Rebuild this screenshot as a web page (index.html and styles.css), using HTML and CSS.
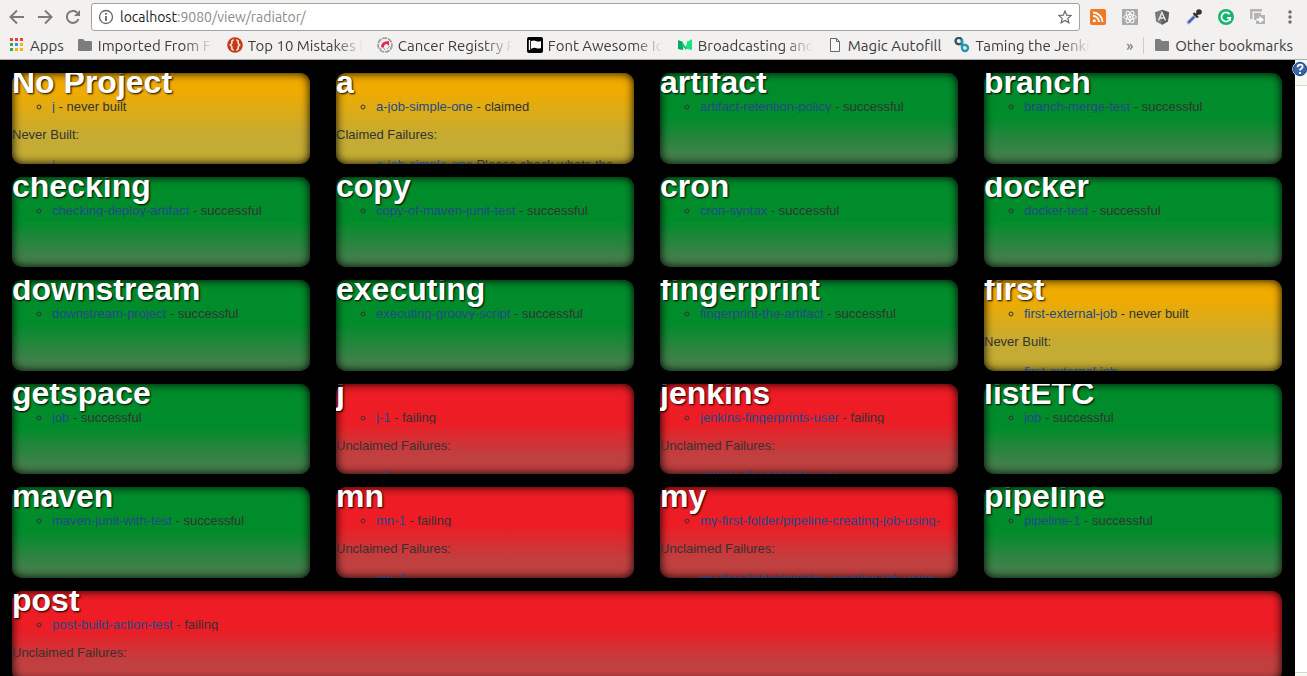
FILE: index.html
```html
<!DOCTYPE html>
<html lang="en">
<head>
<meta charset="utf-8">
<title>radiator</title>
<link rel="stylesheet" href="styles.css">
</head>
<body>
<header class="browser">
  <div class="toolbar">
    <nav class="nav">
      <button aria-label="Back"><svg width="16" height="16" viewBox="0 0 16 16"><path d="M15 8H2M8 1.5L1.5 8L8 14.500" fill="none" stroke="#7b7b7b" stroke-width="2"/></svg></button>
      <button aria-label="Forward"><svg width="16" height="16" viewBox="0 0 16 16"><path d="M1 8h13M8 1.500L14.500 8L8 14.500" fill="none" stroke="#7b7b7b" stroke-width="2"/></svg></button>
      <button aria-label="Reload"><svg width="16" height="16" viewBox="0 0 16 16"><path d="M13.500 10a6 6 0 1 1-1.300-6.300" fill="none" stroke="#7b7b7b" stroke-width="2"/><path d="M15 1v6H9z" fill="#7b7b7b"/></svg></button>
    </nav>
    <div class="address">
      <svg width="16" height="16" viewBox="0 0 16 16"><circle cx="8" cy="8" r="6.500" fill="none" stroke="#666" stroke-width="1.300"/><path d="M8 7v5M8 4v1.800" stroke="#666" stroke-width="1.800"/></svg>
      <a class="url" href="#"><span class="host">localhost</span>:9080/view/radiator/</a>
      <button aria-label="Bookmark this page"><svg width="14" height="14" viewBox="0 0 14 14"><path d="M7 1l1.700 4.200 4.500.3-3.400 2.900 1.100 4.400L7 10.400l-3.900 2.400 1.100-4.400L.8 5.500l4.500-.3z" fill="none" stroke="#6a6a6a" stroke-width="1.200"/></svg></button>
    </div>
    <div class="extensions">
      <button aria-label="Feed"><svg width="16" height="16" viewBox="0 0 16 16"><rect width="16" height="16" rx="2" fill="#ee7a28"/><circle cx="4.300" cy="11.800" r="1.500" fill="#fff"/><path d="M3 7a6 6 0 0 1 6 6M3 3.500a9.500 9.500 0 0 1 9.500 9.500" fill="none" stroke="#fff" stroke-width="1.800"/></svg></button>
      <button aria-label="React tools"><svg width="16" height="16" viewBox="0 0 16 16"><rect width="16" height="16" fill="#a9a9a9"/><g fill="none" stroke="#fff"><ellipse cx="8" cy="8" rx="6.300" ry="2.400"/><ellipse cx="8" cy="8" rx="6.300" ry="2.400" transform="rotate(60 8 8)"/><ellipse cx="8" cy="8" rx="6.300" ry="2.400" transform="rotate(120 8 8)"/></g><circle cx="8" cy="8" r="1.300" fill="#fff"/></svg></button>
      <button aria-label="Angular tools"><svg width="16" height="16" viewBox="0 0 16 16"><path d="M8 .8l7 2.400-1.100 9.200L8 15.800l-5.900-3.400L1 3.200z" fill="#77797b"/><path d="M8 .8l7 2.400-1.100 9.200L8 15.800z" fill="#5c5f61"/><path d="M4.500 11.500L8 3.500l3.500 8M6 9h4" fill="none" stroke="#e7e7e7" stroke-width="1.400"/></svg></button>
      <button aria-label="Color picker"><svg width="16" height="16" viewBox="0 0 16 16"><path d="M1.500 14.500l8-8" stroke="#98a4bd" stroke-width="3.600"/><path d="M2.500 13.500l5.500-5.500" stroke="#3459d6" stroke-width="1.800"/><path d="M7.500 4l4.500 4.500M10 6l3.500-3.500" stroke="#333" stroke-width="2.400"/><circle cx="13" cy="3" r="2.800" fill="#333"/></svg></button>
      <button aria-label="Grammar"><svg width="16" height="16" viewBox="0 0 16 16"><circle cx="8" cy="8" r="8" fill="#15b76c"/><path d="M11.600 5.300A4.500 4.500 0 1 0 12.400 8.800H9M12.200 8.500v3.200" fill="none" stroke="#fff" stroke-width="1.700"/></svg></button>
      <button aria-label="Copy tabs"><svg width="16" height="16" viewBox="0 0 16 16"><path d="M1.200 10V1.200H12" fill="none" stroke="#b4b4b4" stroke-width="2.400"/><path d="M4 4h7v2h4v9H6v-4H4z" fill="#b4b4b4"/><path d="M6.500 9.500h3V7l4.500 3.700-4.500 3.500v-2.400h-3z" fill="#fff"/></svg></button>
      <button class="menu" aria-label="Menu"><svg width="4" height="16" viewBox="0 0 4 16"><g fill="#6e6e6e"><circle cx="2" cy="3" r="1.700"/><circle cx="2" cy="8" r="1.700"/><circle cx="2" cy="13" r="1.700"/></g></svg></button>
    </div>
  </div>
  <nav class="bookmarks">
    <a class="mark" href="#"><svg width="16" height="16" viewBox="0 0 16 16"><path d="M1 1h3v3H1zM6 1h3v3H6zM11 1h3v3h-3z" fill="#ea4335"/><path d="M1 6h3v3H1zM1 11h3v3H1z" fill="#34a853"/><path d="M6 6h3v3H6z" fill="#4285f4"/><path d="M6 11h3v3H6zM11 6h3v3h-3zM11 11h3v3h-3z" fill="#f5b400"/></svg><span>Apps</span></a>
    <a class="mark wide" href="#"><svg width="16" height="16" viewBox="0 0 16 16"><path d="M1 3q0-1 1-1h4l2 2h6q1 0 1 1v8q0 1-1 1H2q-1 0-1-1z" fill="#7d7d7d"/></svg><span>Imported From Fi</span></a>
    <a class="mark wide" href="#"><svg width="16" height="16" viewBox="0 0 16 16"><circle cx="8" cy="8" r="7.800" fill="#c33c17"/><path d="M6.800 3q-2 0-2 2v1.500L3.300 8l1.500 1.500V11q0 2 2 2M9.200 3q2 0 2 2v1.500L12.700 8l-1.500 1.500V11q0 2-2 2" fill="none" stroke="#f8e4dc" stroke-width="1.600"/></svg><span>Top 10 Mistakes N</span></a>
    <a class="mark wide" href="#"><svg width="16" height="16" viewBox="0 0 16 16"><circle cx="8" cy="8" r="7" fill="#eee" stroke="#999" stroke-width="1.600" stroke-dasharray="5 1"/><path d="M4 10q0-6 8-6v5l-2-2q-3 0-3 3z" fill="#ee2445"/><path d="M3 12l3-2 2 3M10 12l3-3" stroke="#999" fill="none"/></svg><span>Cancer Registry P</span></a>
    <a class="mark wide" href="#"><svg width="16" height="16" viewBox="0 0 16 16"><rect width="16" height="16" rx="2" fill="#000"/><path d="M2.500 3v10" stroke="#fff" stroke-width="1.400"/><path d="M4 4q3-1 5 0t5 0v7q-3 1-5 0t-5 1z" fill="#fff"/></svg><span>Font Awesome Ic</span></a>
    <a class="mark wide" href="#"><svg width="16" height="16" viewBox="0 0 16 16"><path d="M1 3l5 2v8l-5-1z" fill="#07a862"/><path d="M5 5l4 5 2-7v6l-2 4-4-4z" fill="#12c978"/><path d="M10 5l5-3v11l-5-1z" fill="#16e585"/></svg><span>Broadcasting and</span></a>
    <a class="mark" href="#"><svg width="16" height="16" viewBox="0 0 16 16"><path d="M3.500 1.500h6l3 3v10h-9zM9.500 1.500v3h3" fill="#f8f8f8" stroke="#666"/></svg><span>Magic Autofill</span></a>
    <a class="mark wide" href="#"><svg width="16" height="16" viewBox="0 0 16 16"><path d="M8 8V4a3.200 3.200 0 1 0-2 3h3" fill="none" stroke="#365665" stroke-width="2.400"/><path d="M8 2v9a3 3 0 1 0 3-3H7" fill="none" stroke="#2497b5" stroke-width="2.400"/></svg><span>Taming the Jenki</span></a>
    <button class="more" aria-label="More bookmarks">»</button>
    <a class="mark other" href="#"><svg width="16" height="16" viewBox="0 0 16 16"><path d="M1 3q0-1 1-1h4l2 2h6q1 0 1 1v8q0 1-1 1H2q-1 0-1-1z" fill="#7d7d7d"/></svg><span>Other bookmarks</span></a>
  </nav>
</header>
<div class="page">
  <main class="radiator">
    <section class="card amber"><div class="body"><h1>No Project</h1><ul><li><a href="#">j</a> - never built</li></ul><p>Never Built:</p><ul class="detail"><li><a href="#">j</a></li></ul></div></section>
    <section class="card amber"><div class="body"><h1>a</h1><ul><li><a href="#">a-job-simple-one</a> - claimed</li></ul><p>Claimed Failures:</p><ul class="detail"><li><a href="#">a-job-simple-one</a> Please check whats the</li></ul></div></section>
    <section class="card green"><div class="body"><h1>artifact</h1><ul><li><a href="#">artifact-retention-policy</a> - successful</li></ul></div></section>
    <section class="card green"><div class="body"><h1>branch</h1><ul><li><a href="#">branch-merge-test</a> - successful</li></ul></div></section>
    <section class="card green"><div class="body"><h1>checking</h1><ul><li><a href="#">checking-deploy-artifact</a> - successful</li></ul></div></section>
    <section class="card green"><div class="body"><h1>copy</h1><ul><li><a href="#">copy-of-maven-junit-test</a> - successful</li></ul></div></section>
    <section class="card green"><div class="body"><h1>cron</h1><ul><li><a href="#">cron-syntax</a> - successful</li></ul></div></section>
    <section class="card green"><div class="body"><h1>docker</h1><ul><li><a href="#">docker-test</a> - successful</li></ul></div></section>
    <section class="card green"><div class="body"><h1>downstream</h1><ul><li><a href="#">downstream-project</a> - successful</li></ul></div></section>
    <section class="card green"><div class="body"><h1>executing</h1><ul><li><a href="#">executing-groovy-script</a> - successful</li></ul></div></section>
    <section class="card green"><div class="body"><h1>fingerprint</h1><ul><li><a href="#">fingerprint-the-artifact</a> - successful</li></ul></div></section>
    <section class="card amber"><div class="body"><h1>first</h1><ul><li><a href="#">first-external-job</a> - never built</li></ul><p>Never Built:</p><ul class="detail"><li><a href="#">first-external-job</a></li></ul></div></section>
    <section class="card green"><div class="body"><h1>getspace</h1><ul><li><a href="#">job</a> - successful</li></ul></div></section>
    <section class="card red"><div class="body"><h1>j</h1><ul><li><a href="#">j-1</a> - failing</li></ul><p>Unclaimed Failures:</p><ul class="detail"><li><a href="#">j-1</a></li></ul></div></section>
    <section class="card red"><div class="body"><h1>jenkins</h1><ul><li><a href="#">jenkins-fingerprints-user</a> - failing</li></ul><p>Unclaimed Failures:</p><ul class="detail"><li><a href="#">jenkins-fingerprints-user</a></li></ul></div></section>
    <section class="card green"><div class="body"><h1>listETC</h1><ul><li><a href="#">job</a> - successful</li></ul></div></section>
    <section class="card green"><div class="body"><h1>maven</h1><ul><li><a href="#">maven-junit-with-test</a> - successful</li></ul></div></section>
    <section class="card red"><div class="body"><h1>mn</h1><ul><li><a href="#">mn-1</a> - failing</li></ul><p>Unclaimed Failures:</p><ul class="detail"><li><a href="#">mn-1</a></li></ul></div></section>
    <section class="card red"><div class="body"><h1>my</h1><ul><li><a href="#">my-first-folder/pipeline-creating-job-using-</a></li></ul><p>Unclaimed Failures:</p><ul class="detail"><li><a href="#">my-first-folder/pipeline-creating-job-using-</a></li></ul></div></section>
    <section class="card green"><div class="body"><h1>pipeline</h1><ul><li><a href="#">pipeline-1</a> - successful</li></ul></div></section>
    <section class="card red full"><div class="body"><h1>post</h1><ul><li><a href="#">post-build-action-test</a> - failing</li></ul><p>Unclaimed Failures:</p></div></section>
  </main>
  <aside class="side">
    <div class="side-head"></div>
    <div class="side-foot"></div>
    <a class="help" href="#" aria-label="Help"><svg width="16" height="16" viewBox="0 0 16 16"><circle cx="8" cy="8" r="7.300" fill="#3a65a5" stroke="#dfe7f2" stroke-width="1"/><circle cx="8" cy="8" r="6.500" fill="none" stroke="#204a87"/><path d="M5.600 6.200q0-2.600 2.500-2.600t2.500 2.200q0 1.200-1.300 1.800T8 9.600M8 11v2" fill="none" stroke="#fff" stroke-width="1.800"/></svg></a>
  </aside>
</div>
</body>
</html>
```
FILE: styles.css
```css
* { box-sizing: border-box; }

body {
  margin: 0;
  height: 100vh;
  overflow: hidden;
  display: flex;
  flex-direction: column;
  background: #fff;
  font-family: "Liberation Sans", Arial, sans-serif;
}

button {
  padding: 0;
  border: 0;
  background: none;
  display: flex;
}

a { text-decoration: none; }

svg { flex: none; display: block; }

.browser {
  flex: none;
  background: #f2f1f0;
  border-bottom: 1px solid #b0aeac;
  color: #3c3c3c;
  font-family: Ubuntu, "Noto Sans", sans-serif;
  font-size: 15px;
}

.toolbar {
  display: flex;
  align-items: center;
  padding: 3px 15px 0 9px;
}

.nav { display: flex; gap: 12px; margin-right: 10px; }

.address {
  flex: 1;
  height: 28px;
  display: flex;
  align-items: center;
  gap: 6px;
  padding: 0 7px 0 6px;
  background: #fff;
  border: 1px solid #a5a3a1;
  border-radius: 3px;
}

.url { flex: 1; color: #8b8b8b; font-size: 14px; }
.host { color: #222; }

.extensions { display: flex; gap: 16px; margin-left: 10px; }
.menu { margin-left: 6px; }

.bookmarks {
  display: flex;
  align-items: center;
  height: 28px;
  padding: 0 14px 0 9px;
}

.mark {
  flex: none;
  display: flex;
  align-items: center;
  gap: 5px;
  margin-right: 13px;
  color: #3c3c3c;
  white-space: nowrap;
}

.wide { margin-right: 14px; }

.wide span {
  width: 115px;
  overflow: hidden;
  mask-image: linear-gradient(to right, #000 75%, transparent);
}

.more {
  margin-left: auto;
  margin-right: 10px;
  color: #666;
  font: inherit;
}

.other {
  margin-right: 0;
  padding-left: 10px;
  border-left: 1px solid #cfcdcb;
}

.page {
  flex: 1;
  min-height: 0;
  display: flex;
  background: #000;
}

.radiator {
  flex: 1;
  height: calc(100% + 5px);
  display: grid;
  grid-template-columns: repeat(4, minmax(0, 1fr));
  grid-template-rows: repeat(6, minmax(0, 1fr));
  gap: 13px 26px;
  padding: 13px 13px 0 12px;
}

.card {
  border-radius: 10px;
  box-shadow: inset 0 0 10px #000;
  color: #333;
  font-size: 13px;
}

.full { grid-column: 1 / -1; }

.amber { background: linear-gradient(#f0ab00 20%, #c4ab33 70%); }
.green { background: linear-gradient(#008c2b 48%, #42804b 90%); }
.red { background: linear-gradient(#ee1c25 42%, #c04040 80%); }

.body { height: 100%; overflow: hidden; }

.card h1 {
  margin: 0 0 9px;
  color: #fff;
  font-size: 32px;
  line-height: 18px;
  text-shadow: 1px 1px 2px #000;
}

.card ul {
  margin: 0;
  padding: 0 0 0 40px;
  overflow: hidden;
  list-style: circle;
  line-height: 13px;
}

.card .detail { list-style: none; }

.card li { white-space: nowrap; }
.card a { color: #204a87; }

.card p {
  margin: 14px 0 16px;
  line-height: 15px;
}

.side {
  flex: none;
  width: 12px;
  display: flex;
  flex-direction: column;
  justify-content: space-between;
  position: relative;
  background: #fff;
}

.side-head {
  height: 26px;
  background: #f6faf2;
  border-bottom: 1px solid #d3d7cf;
}

.side-foot {
  height: 4px;
  background: #f6faf2;
  border-top: 1px solid #d3d7cf;
}

.help {
  position: absolute;
  top: 1px;
  left: -3px;
}
```
